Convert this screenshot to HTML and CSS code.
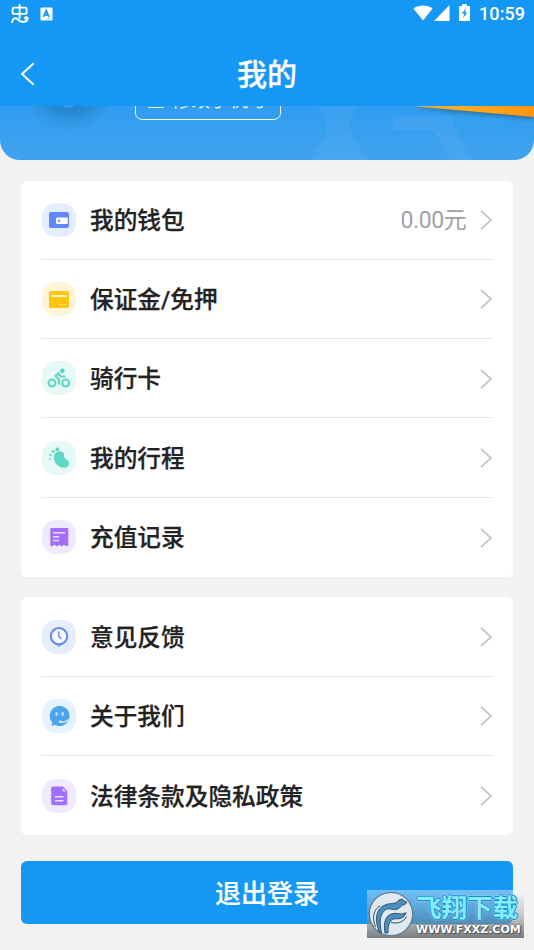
FILE: index.html
```html
<!DOCTYPE html>
<html lang="zh-CN">
<head>
<meta charset="utf-8">
<title>我的</title>
<link rel="stylesheet" href="styles.css">
</head>
<body>
<div class="app">
  <header class="top">
    <div class="status">
      <svg class="bug" width="20" height="20" viewBox="0 0 20 20" fill="none" stroke="#fff" stroke-width="1.900" stroke-linecap="round" stroke-linejoin="round"><rect x="2.600" y="3.600" width="14" height="6.300" rx="1.300"/><path d="M9.600 1v13M2 18.200c1-4 3.800-5 5.500-3 2 2.500 4 3.200 7 2.600 3.800-.8 4-4.300 2-4.600-1.600-.2-1.800 1.200-.8 1.800"/></svg>
      <svg class="app-note" width="13" height="14" viewBox="0 0 13 14"><rect x=".5" y=".5" width="12" height="13" rx="1" fill="#fff"/><path d="M3.500 9.800 6.200 3.500 8.900 9.800M4.600 7.800h3.200" fill="none" stroke="#1497f5" stroke-width="1.700"/><path d="M6.500 11.900h4" stroke="#1497f5" stroke-width=".8" stroke-dasharray="1 .6"/></svg>
      <span class="spacer"></span>
      <svg class="wifi" width="20" height="16" viewBox="0 0 20 16"><path d="M10 15.500.5 3.800C5.500-.6 14.500-.6 19.500 3.800Z" fill="#fff"/></svg>
      <svg class="signal" width="16" height="16" viewBox="0 0 16 16"><path d="M15.500 0v16H0Z" fill="#fff"/></svg>
      <svg class="battery" width="11" height="17" viewBox="0 0 11 17"><path d="M3.200 0h4.600v2H11v15H0V2h3.200Z" fill="#fff"/><path d="M7 4 2.800 9.600h2.300L4.200 14l4.200-5.600H6Z" fill="#1497f5"/></svg>
      <time class="clock">10:59</time>
    </div>
    <div class="titlebar">
      <svg class="back" width="16" height="24" viewBox="0 0 16 24" fill="none" stroke="#fff" stroke-width="2"><path d="M13.700 1.200 2 12l11.700 10.800"/></svg>
      <h1>我的</h1>
    </div>
  </header>

  <section class="hero">
    <div class="avatar"></div>
    <div class="phone"><i></i><span>修改手机号</span></div>
    <svg class="decor" width="534" height="54" viewBox="0 0 534 54">
      <defs><linearGradient id="orange"><stop offset="0" stop-color="#e9ae3f"/><stop offset=".45" stop-color="#ffac22"/><stop offset="1" stop-color="#ff950c"/></linearGradient></defs>
      <path d="M61 0h14q-7 3-14 0Z" fill="#3da5ef"/>
      <path d="M318 0h40q-12 20-5 30l14 24h-55l12-24q8-14-6-30ZM393 10h62l-2 9 19 35h-22l-14-26q-2-4-8-4h-35Z" fill="#fff" opacity=".05"/>
      <path class="ribbon" d="M412 0h122v11Z" fill="url(#orange)"/>
    </svg>
  </section>

  <main>
    <ul class="card">
      <li><svg class="ic" viewBox="0 0 34 34"><rect width="34" height="34" rx="14" fill="#e5edff"/><rect x="7" y="9" width="20" height="16" rx="1.800" fill="#6386f8"/><path d="M15.500 14.500H25.700v6.500H15.500q-1.500 0-1.500-1.500V16q0-1.500 1.500-1.500Z" fill="#fff"/><circle cx="17" cy="17.700" r="1.200" fill="#6386f8"/></svg><span class="label">我的钱包</span><span class="amount">0.00元</span><svg class="chev" viewBox="0 0 12 20"><path d="M1 .8 11 10 1 19.200"/></svg></li>
      <li><svg class="ic" viewBox="0 0 34 34"><rect width="34" height="34" rx="14" fill="#fff5d9"/><rect x="7" y="9" width="20" height="17" rx="1.800" fill="#ffc50d"/><path d="M9.500 14h15.500" stroke="#fff2bd" stroke-width="2"/><path d="M16.500 22.500h8" stroke="#ffe58a" stroke-width="1" stroke-dasharray="3.500 1"/></svg><span class="label">保证金/免押</span><svg class="chev" viewBox="0 0 12 20"><path d="M1 .8 11 10 1 19.200"/></svg></li>
      <li><svg class="ic" viewBox="0 0 34 34"><rect width="34" height="34" rx="14" fill="#e5f9f6"/><g fill="none" stroke="#5fd7c3" stroke-width="2.100"><circle cx="10" cy="22" r="3.500"/><circle cx="23.700" cy="22" r="3.500"/><path d="m17.500 11.500-4 3.400 3.500 3.600v5.300M16 12.500l3 3h4.500" stroke-linejoin="round"/></g><circle cx="20.300" cy="9.900" r="2.300" fill="#5fd7c3"/></svg><span class="label">骑行卡</span><svg class="chev" viewBox="0 0 12 20"><path d="M1 .8 11 10 1 19.200"/></svg></li>
      <li><svg class="ic" viewBox="0 0 34 34"><rect width="34" height="34" rx="14" fill="#e5f9f6"/><g fill="#5fd7c3"><path d="M17 10.500c4-.7 5.600 2 5.100 5-.4 2.700 4.700 2.600 4.900 6.800.2 3.600-3.900 5.300-7.300 4.200-5-1.500-8.400-6.200-7.800-11 .3-2.700 2-4.500 5.100-5Z"/><circle cx="15.300" cy="8.400" r="1.900"/><circle cx="11.200" cy="10.600" r="1.500"/><circle cx="8.500" cy="14" r="1.200"/><circle cx="8.200" cy="18" r="1"/></g></svg><span class="label">我的行程</span><svg class="chev" viewBox="0 0 12 20"><path d="M1 .8 11 10 1 19.200"/></svg></li>
      <li><svg class="ic" viewBox="0 0 34 34"><rect width="34" height="34" rx="14" fill="#f0eaff"/><path d="M8.300 8h18v17.500l-2 .7-2.400-1.500-2.300 1.700-2.300-1.700-2.400 1.700-2.300-1.700-2.300 1.500-2-.5Z" fill="#a070fa"/><path d="M11 12.800h12M11 16.700h6.200M11 20.500h6.200" stroke="#eadfff" stroke-width="1.400"/></svg><span class="label">充值记录</span><svg class="chev" viewBox="0 0 12 20"><path d="M1 .8 11 10 1 19.200"/></svg></li>
    </ul>
    <ul class="card">
      <li><svg class="ic" viewBox="0 0 34 34"><rect width="34" height="34" rx="14" fill="#e6eefe"/><path d="m14.500 24 2.500 3 2.500-3Z" fill="#678aeb"/><circle cx="17" cy="16.200" r="8.200" fill="#f6f9ff" stroke="#678aeb" stroke-width="2.100"/><path d="M16.800 11.500v5l2.600 2.500" fill="none" stroke="#678aeb" stroke-width="1.400"/></svg><span class="label">意见反馈</span><svg class="chev" viewBox="0 0 12 20"><path d="M1 .8 11 10 1 19.200"/></svg></li>
      <li><svg class="ic" viewBox="0 0 34 34"><rect width="34" height="34" rx="14" fill="#e4f3ff"/><path d="M17.700 7c5.500 0 9.900 4.400 9.900 9.900S23.200 27 17.700 27c-2 0-3.500-.5-5-1.300-1.200.9-2.400.9-3.500.8.900-1 1.300-2 1.100-3.200C4.800 17.500 8.700 7 17.700 7Z" fill="#4ca4ec"/><g fill="#c6e5ff"><ellipse cx="14.600" cy="15" rx="1.200" ry="1.900"/><ellipse cx="20.700" cy="15" rx="1.200" ry="1.900"/></g><circle cx="18.500" cy="22.800" r="1.300" fill="#fff"/><path d="M18.500 23.400q5 .5 8.300-3" fill="none" stroke="#d8edff" stroke-width="1.300"/></svg><span class="label">关于我们</span><svg class="chev" viewBox="0 0 12 20"><path d="M1 .8 11 10 1 19.200"/></svg></li>
      <li><svg class="ic" viewBox="0 0 34 34"><rect width="34" height="34" rx="14" fill="#f0eaff"/><path d="M11 7.500h10l4.300 4.500v12.500q0 1.800-1.800 1.800H11q-1.800 0-1.800-1.800V9.300q0-1.800 1.800-1.800Z" fill="#a070fa"/><path d="m20.500 9 3.500 3.600h-2q-1.500 0-1.500-1.500Z" fill="#eee5ff"/><path d="M13 17.700h8.500M13 21.700h8.500" stroke="#eadfff" stroke-width="1.400"/></svg><span class="label">法律条款及隐私政策</span><svg class="chev" viewBox="0 0 12 20"><path d="M1 .8 11 10 1 19.200"/></svg></li>
    </ul>
    <button class="logout">退出登录</button>
  </main>

  <aside class="mark">
    <svg class="mark-logo" width="46" height="46" viewBox="0 0 46 46"><circle cx="23" cy="23" r="21.700" fill="#dfe8ee" stroke="#5f7d91" stroke-width="1.300"/><g stroke="#31516b" stroke-width="1"><path d="M11 41C6 26 9 18 16 14.500c7-3.500 11 0 15-5.500l3.500-1 .2 1.200 4 1.800-1 2c-5 .5-5 5-10 5.500-4 .4-7-2-10.500.5C12 23 11 30 13.500 42Z" fill="#4a8fbe"/><path d="M17 42c-2-11 1-19 9-19.500 6-.3 7 1.500 12-.8-2 5.500-6 6.300-10 6-5-.3-8.500 4-8 14.300Z" fill="#4a8fbe"/><path d="M7.500 36C3.500 26 6 18 12 15M23 31.500c7 1.500 13-.5 15.500-6" fill="none"/></g></svg>
    <div class="mark-text"><b>飞翔下载</b><small>WWW.FXXZ.COM</small></div>
  </aside>
</div>
</body>
</html>
```

FILE: styles.css
```css
* { box-sizing: border-box; }
body { margin: 0; background: #f2f2f2; font-family: Roboto, "Noto Sans CJK SC", sans-serif; color: #222; }
.app { position: relative; width: 534px; height: 950px; overflow: hidden; }
.top { height: 106px; background: #1497f5; color: #fff; }
.status { height: 28px; display: flex; align-items: center; padding: 0 10px; }
.app-note { margin-left: 10px; }
.spacer { flex: 1; }
.wifi { margin: -3px 1px 0 0; }
.signal { margin-top: -2px; }
.battery { margin: -3px 9px 0 9px; }
.clock { font-size: 18px; line-height: 28px; font-weight: 500; width: 45px; letter-spacing: .1px; }
.titlebar { height: 78px; display: grid; grid-template-columns: 60px 1fr 60px; align-items: center; }
.back { margin: 14px 0 0 20px; }
h1 { margin: 16px 0 0; font-size: 30px; line-height: 44px; font-weight: 500; text-align: center; -webkit-text-stroke: .25px; }
.hero { position: relative; height: 53.500px; overflow: hidden; border-radius: 0 0 20px 20px; background: linear-gradient(#309df1, #40a2ef); display: flex; align-items: flex-start; }
.avatar { width: 104px; height: 104px; margin: -80px 0 0 17px; border-radius: 50%; background: radial-gradient(circle closest-side, #2380c7 52%, #2788d1 65%, #2f96e4 84%, #359ceb 98%, #379eed00 100%); }
.phone { width: 146px; height: 40px; margin: -26px 0 0 14px; border: 1.500px solid #eef8ff; border-radius: 7px; color: #e3f3ff; display: flex; align-items: center; padding: 2px 0 0 12px; font-size: 19px; line-height: 24px; flex: none; }
.phone i { width: 16px; height: 16px; border-bottom: 1.500px solid #e3f3ff; margin: -3px 8px 0 0; }
.decor { position: absolute; left: 0; top: 0; }
.ribbon { filter: drop-shadow(-1px 2px 2px rgba(42, 77, 90, .6)); }
main { padding: 21px 21px 0; }
.card { list-style: none; margin: 0 0 20.500px; padding: 0 20px; background: #fff; border-radius: 6px; }
.card li { height: 79.300px; display: flex; align-items: center; border-bottom: 1px solid #e8e8e8; }
.card li:last-child { border-bottom: 0; }
.ic { width: 34px; height: 34px; margin-left: .7px; flex: none; }
.label { flex: 1; margin: 2px 0 0 14.300px; font-size: 23.700px; line-height: 34px; font-weight: 500; white-space: nowrap; -webkit-text-stroke: .25px; }
.amount { color: #a2a2a2; font-size: 23px; letter-spacing: -.35px; margin: 2px 13.500px 0 0; line-height: 34px; }
.chev { width: 12px; height: 20px; margin: 1px 1px 0 0; fill: none; stroke: #bfc3c8; stroke-width: 1.700; flex: none; }
.logout { display: block; width: 100%; height: 63px; margin-top: 25.500px; border: 0; padding: 3px 0 0; border-radius: 6px; background: #1497f5; color: #fff; font: 500 26px/60px Roboto, "Noto Sans CJK SC", sans-serif; -webkit-text-stroke: .2px; }
.mark { position: absolute; left: 367px; top: 890px; width: 157px; height: 48px; display: flex; align-items: center; background: linear-gradient(rgba(255, 255, 255, .4), rgba(145, 155, 160, .5) 55%, rgba(100, 105, 110, .85)); }
.mark-logo { margin-left: 1px; flex: none; }
.mark-text { margin-left: 2px; height: 46px; display: flex; flex-direction: column; }
.mark-text b { margin-top: 3px; font-size: 25.500px; line-height: 29px; font-weight: 700; color: #84edff; text-shadow: 1px 0 #1789cf, -1px 0 #1789cf, 0 1px #1789cf, 0 -1px #1789cf, 0 0 3px #fff; white-space: nowrap; }
.mark-text small { font: 700 11px/14px "DejaVu Sans", sans-serif; color: #fff; text-shadow: 0 0 2px #444, 1px 1px 1px #555; white-space: nowrap; }
```
